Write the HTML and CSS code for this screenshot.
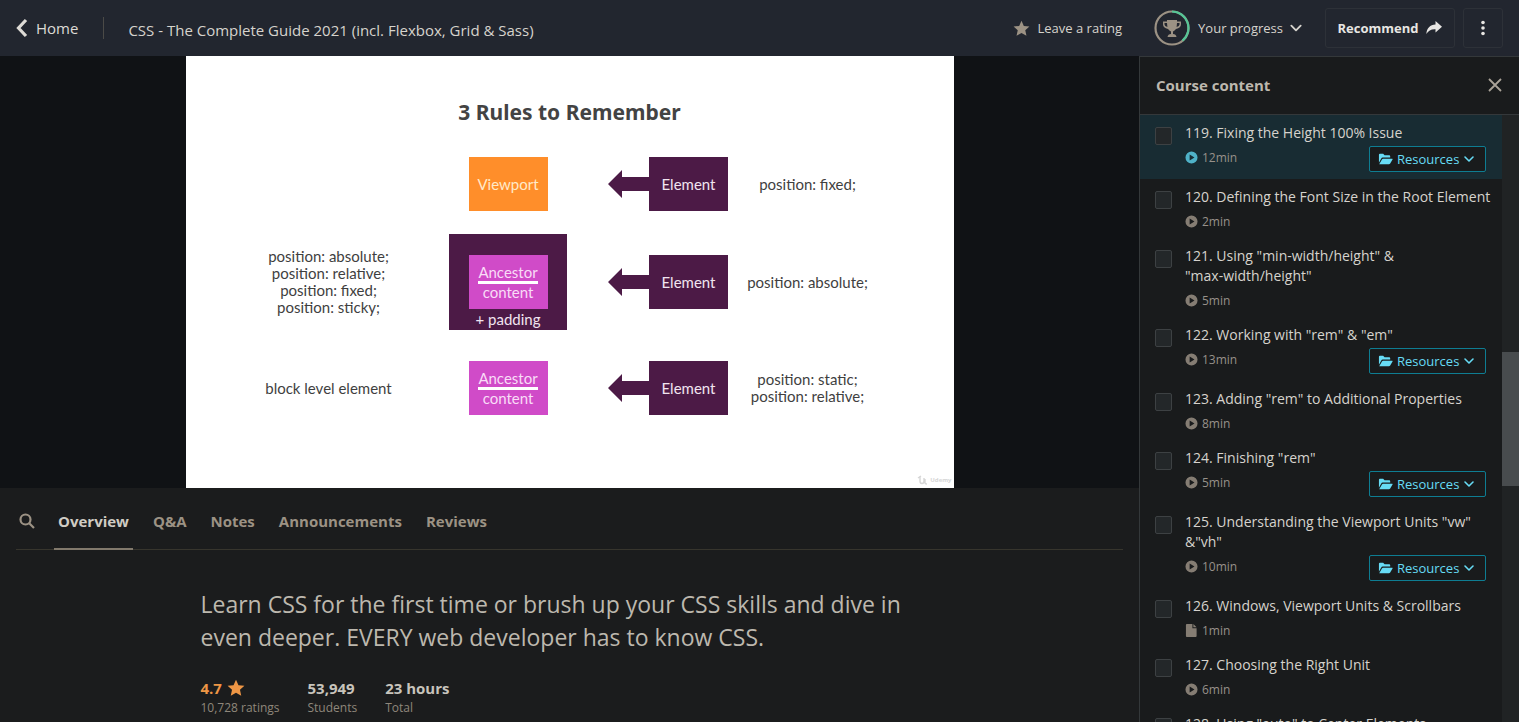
FILE: index.html
```html
<!DOCTYPE html>
<html lang="en">
<head>
<meta charset="utf-8">
<title>CSS - The Complete Guide 2021</title>
<link rel="stylesheet" href="styles.css">
</head>
<body>
<svg class="defs" width="0" height="0" aria-hidden="true">
  <symbol id="star" viewBox="0 0 24 24"><path d="M12 1l3.300 7.300 7.900.8-5.900 5.300 1.700 7.800L12 18.200l-7 4 1.700-7.800L.8 9.100l7.900-.8z"/></symbol>
  <symbol id="down" viewBox="0 0 12 12"><path d="M2 4l4 4 4-4" fill="none" stroke="currentColor" stroke-width="1.600" stroke-linecap="round" stroke-linejoin="round"/></symbol>
  <symbol id="play" viewBox="0 0 14 14"><path fill-rule="evenodd" d="M7 .5a6.500 6.500 0 1 0 0 13a6.500 6.500 0 0 0 0-13zM5 3.800v6.400L10.200 7z"/></symbol>
  <symbol id="file" viewBox="0 0 14 14"><path d="M1 1q0-1 1-1h6v4.500h4.500V13q0 1-1 1H2q-1 0-1-1zM9 0l3.500 3.500H9z"/></symbol>
  <symbol id="folder" viewBox="0 0 16 14"><path d="M1 11V2.500Q1 1.500 2 1.500h3.500L7 3h5q1 0 1 1v1.500H5Q4 5.500 3.300 6.600zM1.300 12.500l2.900-5q.4-.8 1.300-.8H15.200q.7 0 .3.700l-2.500 4.300q-.5.800-1.400.8z"/></symbol>
</svg>

<header class="topbar">
  <a class="home" href="#"><svg width="12" height="20" viewBox="0 0 12 20"><path d="M10 2L2.500 10 10 18" fill="none" stroke="currentColor" stroke-width="3.200"/></svg>Home</a>
  <h1 class="course-title">CSS - The Complete Guide 2021 (incl. Flexbox, Grid &amp; Sass)</h1>
  <button class="plain rating"><svg class="star" width="17" height="17"><use href="#star"/></svg>Leave a rating</button>
  <button class="plain progress">
    <svg width="36" height="36" viewBox="0 0 36 36">
      <circle cx="18" cy="18" r="16.500" fill="none" stroke="#9c9284" stroke-width="2.200"/>
      <path d="M18 1.500A16.500 16.500 0 0 1 28.500 30.700" fill="none" stroke="#56c596" stroke-width="2.200"/>
      <path fill="#9c9284" fill-rule="evenodd" d="M13 10h10v1.500h4v2.800q0 3.700-5 4.700-1.400 2-3 2.400v2.600q3 .2 3.500 3h-9q.5-2.800 3.500-3v-2.600q-1.600-.4-3-2.400-5-1-5-4.700v-2.800h4zM13 13h-2.500v1.500q.2 1.700 2.900 2.600zM23 13h2.500v1.500q-.2 1.700-2.900 2.600z"/>
    </svg>
    Your progress
    <svg width="14" height="14"><use href="#down"/></svg>
  </button>
  <button class="boxed recommend">Recommend<svg width="16" height="14" viewBox="0 0 16 14"><path fill="currentColor" d="M9.500 0L16 5.800 9.500 11.500V8.200C5 8 2.500 9.500.3 13 .8 7 4 3.700 9.500 3.400z"/></svg></button>
  <button class="boxed more" aria-label="More options"><svg width="4" height="16" viewBox="0 0 4 16" fill="currentColor"><circle cx="2" cy="2.500" r="1.800"/><circle cx="2" cy="8" r="1.800"/><circle cx="2" cy="13.500" r="1.800"/></svg></button>
</header>

<div class="layout">
  <main>
    <div class="player">
      <section class="slide">
        <h2>3 Rules to Remember</h2>
        <div class="rules">
          <p></p>
          <div class="box viewport">Viewport</div>
          <div class="target"><svg class="arrow" viewBox="0 0 41 28"><path d="M0 14L14 0v7h27v14H14v7z"/></svg><div class="box">Element</div></div>
          <p>position: fixed;</p>

          <p>position: absolute;<br>position: relative;<br>position: fixed;<br>position: sticky;</p>
          <div class="padded"><div class="box ancestor"><span>Ancestor</span><span>content</span></div>+ padding</div>
          <div class="target"><svg class="arrow" viewBox="0 0 41 28"><path d="M0 14L14 0v7h27v14H14v7z"/></svg><div class="box">Element</div></div>
          <p>position: absolute;</p>

          <p>block level element</p>
          <div class="box ancestor"><span>Ancestor</span><span>content</span></div>
          <div class="target"><svg class="arrow" viewBox="0 0 41 28"><path d="M0 14L14 0v7h27v14H14v7z"/></svg><div class="box">Element</div></div>
          <p>position: static;<br>position: relative;</p>
        </div>
        <div class="watermark"><svg width="11" height="10" viewBox="0 0 11 10"><path d="M1 3l3-2M3 1v5q0 2.500 2 2.500T7 6V3M8 4v4q0 1 2 1" fill="none" stroke="currentColor" stroke-width="1.400"/></svg>Udemy</div>
      </section>
    </div>

    <nav class="tabs">
      <button class="search" aria-label="Search"><svg width="16" height="16" viewBox="0 0 16 16" fill="none" stroke="currentColor" stroke-width="2.200"><circle cx="6.500" cy="6.500" r="5"/><path d="M10.200 10.200l4.800 4.800"/></svg></button>
      <a class="tab current" href="#">Overview</a>
      <a class="tab" href="#">Q&amp;A</a>
      <a class="tab" href="#">Notes</a>
      <a class="tab" href="#">Announcements</a>
      <a class="tab" href="#">Reviews</a>
    </nav>

    <section class="overview">
      <p class="headline">Learn CSS for the first time or brush up your CSS skills and dive in even deeper. EVERY web developer has to know CSS.</p>
      <div class="stats">
        <div class="stat"><strong class="score">4.7 <svg width="18" height="18"><use href="#star"/></svg></strong><span>10,728 ratings</span></div>
        <div class="stat"><strong>53,949</strong><span>Students</span></div>
        <div class="stat"><strong>23 hours</strong><span>Total</span></div>
      </div>
    </section>
  </main>

  <aside class="sidebar">
    <div class="side-head"><h2>Course content</h2><button class="close" aria-label="Close"><svg width="14" height="14" viewBox="0 0 14 14"><path d="M1 1l12 12M13 1L1 13" stroke="currentColor" stroke-width="1.800"/></svg></button></div>
    <div class="side-body">
      <ul class="lessons">
        <li class="active"><input type="checkbox" id="l119"><label for="l119">119. Fixing the Height 100% Issue</label><span class="time"><svg><use href="#play"/></svg>12min</span><button class="res"><svg class="folder"><use href="#folder"/></svg>Resources<svg class="caret"><use href="#down"/></svg></button></li>
        <li><input type="checkbox" id="l120"><label for="l120">120. Defining the Font Size in the Root Element</label><span class="time"><svg><use href="#play"/></svg>2min</span></li>
        <li><input type="checkbox" id="l121"><label for="l121">121. Using "min-width/height" &amp;<br>"max-width/height"</label><span class="time"><svg><use href="#play"/></svg>5min</span></li>
        <li><input type="checkbox" id="l122"><label for="l122">122. Working with "rem" &amp; "em"</label><span class="time"><svg><use href="#play"/></svg>13min</span><button class="res"><svg class="folder"><use href="#folder"/></svg>Resources<svg class="caret"><use href="#down"/></svg></button></li>
        <li><input type="checkbox" id="l123"><label for="l123">123. Adding "rem" to Additional Properties</label><span class="time"><svg><use href="#play"/></svg>8min</span></li>
        <li><input type="checkbox" id="l124"><label for="l124">124. Finishing "rem"</label><span class="time"><svg><use href="#play"/></svg>5min</span><button class="res"><svg class="folder"><use href="#folder"/></svg>Resources<svg class="caret"><use href="#down"/></svg></button></li>
        <li><input type="checkbox" id="l125"><label for="l125">125. Understanding the Viewport Units "vw"<br>&amp;"vh"</label><span class="time"><svg><use href="#play"/></svg>10min</span><button class="res"><svg class="folder"><use href="#folder"/></svg>Resources<svg class="caret"><use href="#down"/></svg></button></li>
        <li><input type="checkbox" id="l126"><label for="l126">126. Windows, Viewport Units &amp; Scrollbars</label><span class="time"><svg><use href="#file"/></svg>1min</span></li>
        <li><input type="checkbox" id="l127"><label for="l127">127. Choosing the Right Unit</label><span class="time"><svg><use href="#play"/></svg>6min</span></li>
        <li><input type="checkbox" id="l128"><label for="l128">128. Using "auto" to Center Elements</label></li>
      </ul>
      <div class="scrollbar"><div class="thumb"></div></div>
    </div>
  </aside>
</div>
</body>
</html>
```
FILE: styles.css
```css
* { box-sizing: border-box; margin: 0; padding: 0; }
body {
  height: 100vh;
  display: flex;
  flex-direction: column;
  overflow: hidden;
  background: #1b1c1d;
  color: #d6d3cd;
  font: 14px/20px "Open Sans", "Noto Sans", sans-serif;
}
button { background: none; border: 0; color: inherit; font: inherit; cursor: pointer; }
a { color: inherit; text-decoration: none; }
svg { flex: none; }
.defs { position: absolute; }

.topbar {
  flex: none;
  display: flex;
  align-items: center;
  height: 56px;
  padding: 0 16px;
  background: #22262f;
}
.home { display: flex; align-items: center; gap: 8px; font-size: 15px; padding-right: 25px; border-right: 1px solid #4b4a47; line-height: 22px; color: #dedbd6; }
.course-title { margin: 3px auto 0 24px; font-size: 15px; font-weight: 400; }
.plain { display: flex; align-items: center; gap: 8px; font-size: 13px; line-height: 22px; }
.star { fill: #9c9284; }
.rating { margin-right: 32px; }
.progress { margin-right: 22px; }
.progress svg:last-child { margin-left: -2px; }
.boxed { display: flex; align-items: center; justify-content: center; gap: 8px; height: 40px; border: 1px solid #2d3138; border-radius: 3px; color: #e8e6e3; }
.recommend { width: 130px; font-size: 13px; font-weight: 700; margin-right: 8px; }
.more { width: 40px; }

.layout { flex: 1; min-height: 0; display: grid; grid-template-columns: 1fr 380px; }
main { min-width: 0; overflow: hidden; }
.player { display: flex; justify-content: center; background: #101215; }
.slide { position: relative; width: 768px; aspect-ratio: 16 / 9; background: #fff; color: #3f3f3f; font: 15px/17px Lato, sans-serif; text-align: center; }
.slide h2 { padding-top: 39px; font: 700 21px/34px "Noto Sans", sans-serif; color: #434343; }
.rules { display: grid; grid-template-columns: 158px 201px 119px 160px; grid-template-rows: 92px 104px 108px; place-items: center; padding: 9px 0 0 64px; }
.box { width: 79px; height: 54px; display: flex; flex-direction: column; align-items: center; justify-content: center; background: #4c1a46; color: #f1e4f0; }
.viewport { background: #ff8e2a; color: #ffe9c8; }
.ancestor { background: #d04bc8; color: #f9dcf7; }
.ancestor span:first-child { border-bottom: 3px solid #fff; }
.padded { width: 118px; height: 96px; padding-top: 21px; display: flex; flex-direction: column; align-items: center; line-height: 20px; background: #4c1a46; color: #f1e4f0; }
.padded .box { line-height: 17px; }
.target { display: flex; align-items: center; }
.arrow { width: 41px; height: 28px; fill: #4c1a46; }
.watermark { position: absolute; right: 2px; bottom: 3px; display: flex; align-items: center; gap: 2px; font: 700 6px/10px "Open Sans", sans-serif; color: #d6d6d6; }

.tabs { display: flex; height: 62px; margin: 0 16px; gap: 16px; border-bottom: 1px solid #37352d; font-size: 15px; font-weight: 700; color: #9c9284; }
.search { width: 22px; display: flex; align-items: center; justify-content: center; padding-top: 5px; }
.tab { padding: 23px 4px 0; height: 62px; }
.current { color: #d0ccc4; border-bottom: 2px solid #82796c; }
.overview { max-width: 738px; margin: 0 auto; padding-top: 38px; }
.headline { font-size: 23px; line-height: 33px; color: #bdb8ae; }
.stats { display: flex; gap: 28px; margin-top: 24px; }
.stat { display: flex; flex-direction: column; font-size: 12px; color: #8f877b; }
.stat strong { display: flex; align-items: center; gap: 5px; font-size: 15px; line-height: 20px; color: #c8c4bc; }
.stat .score { color: #ee9645; }
.score svg { fill: #ee9645; }

.sidebar { min-height: 0; display: flex; flex-direction: column; border: solid #34383a; border-width: 1px 0 0 1px; background: #191b1c; }
.side-head { flex: none; display: flex; align-items: center; justify-content: space-between; height: 58px; padding: 0 17px 2px 16px; border-bottom: 1px solid #34383a; color: #bdb8ae; }
.side-head h2 { font-size: 15px; line-height: 22px; }
.close { display: flex; color: #aaa398; }
.side-body { flex: 1; min-height: 0; display: flex; overflow: hidden; }
.lessons { flex: 1; list-style: none; }
.lessons li { display: grid; grid-template-columns: 17px 1fr auto; column-gap: 13px; align-items: start; padding: 8px 16px 7px 15px; }
.lessons .active { background: #182c33; }
.lessons input { grid-row: 1 / 3; appearance: none; width: 17px; height: 18px; margin-top: 4px; border: 1px solid #3d4143; border-radius: 2px; background: #232729; }
.lessons label { grid-column: 2 / 4; white-space: nowrap; }
.time { grid-column: 2; display: flex; align-items: center; gap: 4px; margin-top: 5px; line-height: 19px; font-size: 12px; color: #97918a; }
.time svg { width: 13px; height: 13px; fill: #857d73; }
.active .time svg { fill: #4fb2c8; }
.res { grid-column: 3; display: flex; align-items: center; gap: 4px; width: 117px; height: 26px; margin-top: 3px; padding: 0 8px; border: 1px solid #0e7d92; border-radius: 2px; background: #191b1c; color: #67dcf5; font-size: 13px; }
.folder { width: 15px; height: 14px; fill: currentColor; }
.caret { width: 12px; height: 12px; }
.scrollbar { width: 17px; background: #202324; }
.thumb { height: 134px; margin-top: 237px; background: #484c4e; }
```
